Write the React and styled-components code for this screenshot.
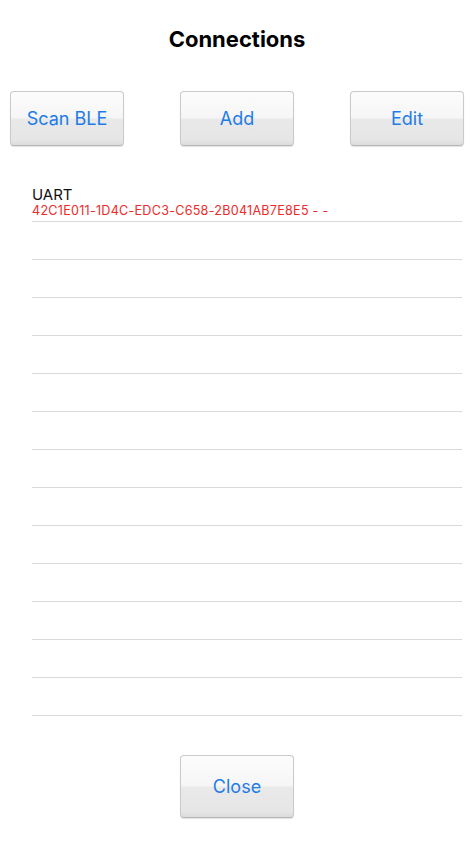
import React from 'react';
import styled, { createGlobalStyle } from 'styled-components';

const GlobalStyle = createGlobalStyle`
  html, body {
    margin: 0;
    padding: 0;
    background: #ffffff;
    font-family: Inter, "Liberation Sans", sans-serif;
  }
`;

const Page = styled.div`
  width: 474px;
  height: 843px;
  display: flex;
  flex-direction: column;
  box-sizing: border-box;
`;

const Title = styled.h1`
  margin: 0;
  padding-top: 26px;
  height: 26px;
  line-height: 26px;
  text-align: center;
  font-size: 22px;
  font-weight: 700;
  color: #000;
`;

const Toolbar = styled.div`
  display: flex;
  justify-content: space-between;
  padding: 0 10px;
  margin-top: 39px;
`;

const Button = styled.button`
  width: 114px;
  height: ${(p) => p.$h || 55}px;
  padding: 0;
  border: 1px solid #cacaca;
  border-bottom-color: #b8b8b8;
  border-radius: 4px;
  background: linear-gradient(
    to bottom,
    #fcfcfc 0%,
    #f6f6f6 48%,
    #e9e9e9 52%,
    #e6e6e6 90%,
    #dcdcdc 100%
  );
  box-shadow: 0 1px 1px rgba(0, 0, 0, 0.12);
  color: #1e7ce8;
  font-family: Inter, "Liberation Sans", sans-serif;
  font-size: 18px;
  cursor: pointer;
`;

const List = styled.ul`
  list-style: none;
  margin: 38px 12px 0 32px;
  padding: 0;
`;

const Row = styled.li`
  height: 37px;
  border-bottom: 1px solid #d9d9d9;
  display: flex;
  flex-direction: column;
  justify-content: flex-end;
  padding-bottom: 3px;
  box-sizing: content-box;
  margin-top: -3px;
  &:not(:first-child) {
    margin-top: 0;
    padding-bottom: 0;
  }
`;

const Name = styled.div`
  font-size: 15px;
  line-height: 16px;
  color: #111;
`;

const Uuid = styled.div`
  font-size: 12.6px;
  line-height: 15px;
  color: #ec2b2b;
  letter-spacing: 0.25px;
`;

const Footer = styled.div`
  display: flex;
  justify-content: center;
  margin-top: 39px;
`;

const connections = [
  { name: 'UART', uuid: '42C1E011-1D4C-EDC3-C658-2B041AB7E8E5 - -' },
];

export default function App() {
  const rows = Array.from({ length: 14 }, (_, i) => connections[i] || null);

  return (
    <Page>
      <GlobalStyle />
      <Title>Connections</Title>
      <Toolbar>
        <Button>Scan BLE</Button>
        <Button>Add</Button>
        <Button>Edit</Button>
      </Toolbar>
      <List>
        {rows.map((c, i) => (
          <Row key={i}>
            {c && (
              <>
                <Name>{c.name}</Name>
                <Uuid>{c.uuid}</Uuid>
              </>
            )}
          </Row>
        ))}
      </List>
      <Footer>
        <Button $h={63}>Close</Button>
      </Footer>
    </Page>
  );
}
